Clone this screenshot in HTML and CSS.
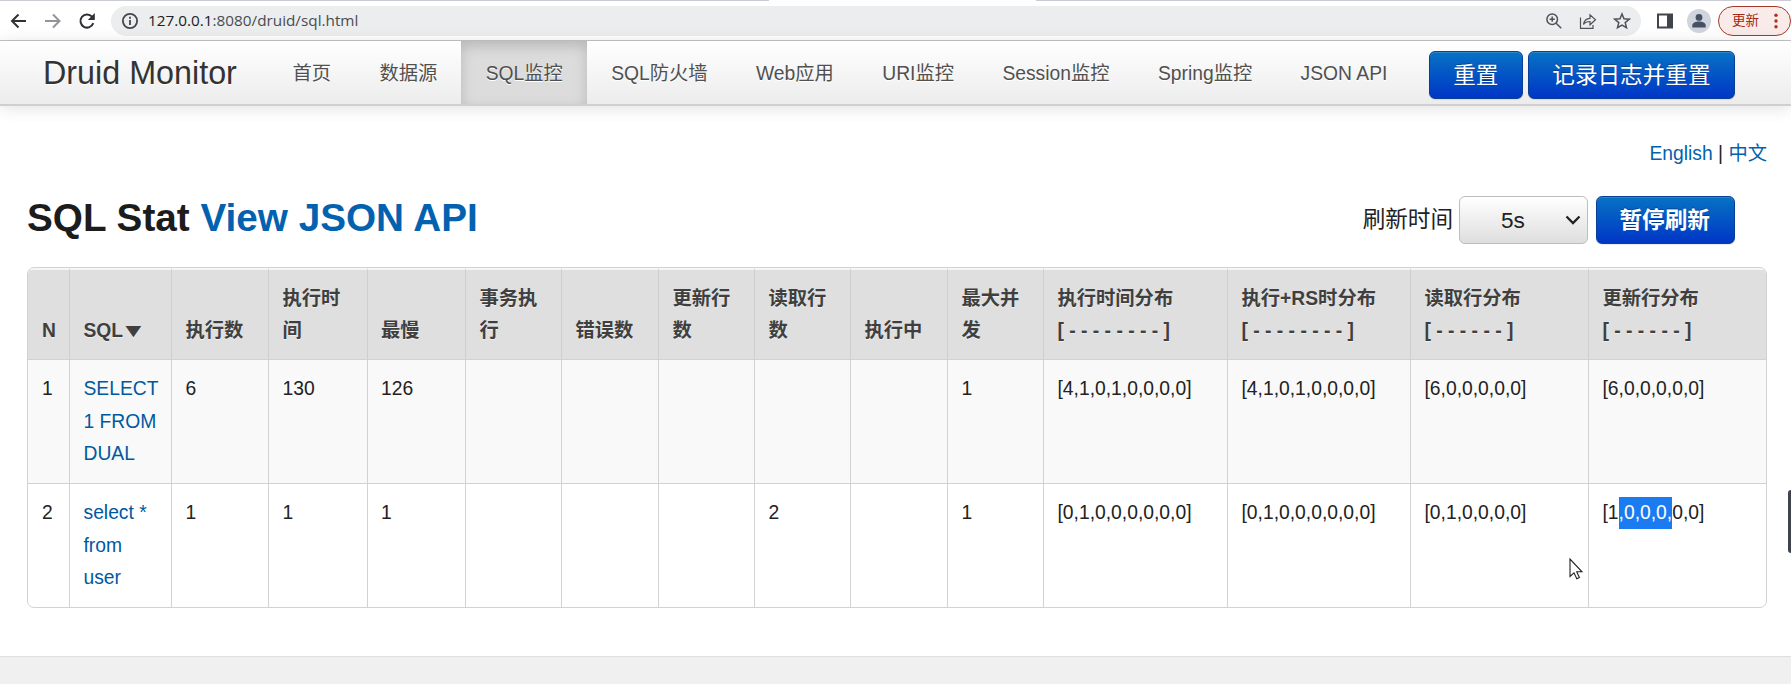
FILE: index.html
```html
<!DOCTYPE html>
<html lang="zh-CN">
<head>
<meta charset="utf-8">
<title>Druid SQL Stat</title>
<link rel="stylesheet" href="styles.css">
</head>
<body>
<div class="page">
  <header class="browser">
    <div class="tab-edge"><i class="edge-left"></i><i class="edge-right"></i></div>
    <div class="toolbar">
      <div class="history">
        <svg width="18" height="18" viewBox="0 0 18 18" class="icon dark"><path d="M16 9H2.5M8.500 2.500L2 9l6.500 6.500"/></svg>
        <svg width="18" height="18" viewBox="0 0 18 18" class="icon muted"><path d="M1 9h14.5M9 2.500L15.500 9 9 15.500"/></svg>
        <svg width="18" height="18" viewBox="0 0 18 18" class="icon dark"><path d="M15.3 11.2A6.6 6.6 0 1 1 14 4.6l1.6 1.7"/><path class="solid" d="M16.8 1v7h-7z"/></svg>
      </div>
      <div class="address">
        <svg width="18" height="18" viewBox="0 0 18 18" class="icon info"><circle cx="9" cy="9" r="7.1"/><path d="M9 8v5M9 4.8v1.9"/></svg>
        <span class="url"><b>127.0.0.1</b>:8080/druid/sql.html</span>
        <div class="address-tools">
          <svg width="18" height="18" viewBox="0 0 18 18" class="icon thin"><circle cx="7.2" cy="7.2" r="5.3"/><path d="M11.2 11.2l5 5M4.6 7.2h5.2M7.2 4.6v5.2"/></svg>
          <svg width="18" height="18" viewBox="0 0 18 18" class="icon share"><path d="M1.500 5.500V16.300h12.500v-3.300M4.500 12.500c.6-4 3-6 6.500-6.200V2.800l5.500 5-5.500 5V9.500c-3 0-5 .8-6.500 3z"/></svg>
          <svg width="18" height="18" viewBox="0 0 18 18" class="icon thin"><path d="M9 2l2 4.800 5.200.4-4 3.400 1.300 5.100L9 13l-4.500 2.700 1.300-5.100-4-3.400 5.200-.4z"/></svg>
        </div>
      </div>
      <svg width="16" height="16" viewBox="0 0 16 16" class="panel"><path fill-rule="evenodd" d="M0 .5h16v15H0zM2 2.500v11h8v-11z"/></svg>
      <svg width="24" height="24" viewBox="0 0 24 24" class="avatar"><circle cx="12" cy="12" r="12" fill="#d0d4dc"/><circle cx="12" cy="8.400" r="3.400" fill="#465063"/><path d="M5.300 18.500v-2c0-5.300 13.400-5.300 13.400 0v2z" fill="#465063"/></svg>
      <div class="update"><span>更新</span><svg width="4" height="16" viewBox="0 0 4 16"><circle cx="2" cy="2.200" r="1.700"/><circle cx="2" cy="8" r="1.700"/><circle cx="2" cy="13.800" r="1.700"/></svg></div>
    </div>
  </header>

  <nav class="navbar">
    <a class="brand">Druid Monitor</a>
    <ul class="menu">
      <li>首页</li><li>数据源</li><li class="active">SQL监控</li><li>SQL防火墙</li><li>Web应用</li><li>URI监控</li><li>Session监控</li><li>Spring监控</li><li>JSON API</li>
    </ul>
    <div class="nav-actions"><a class="btn">重置</a><a class="btn">记录日志并重置</a></div>
  </nav>

  <main class="content">
    <div class="lang"><a>English</a> | <a>中文</a></div>
    <div class="title-row">
      <h3>SQL Stat <a>View JSON API</a></h3>
      <div class="refresh">
        <span class="refresh-label">刷新时间</span>
        <div class="select"><span>5s</span><svg width="16" height="10" viewBox="0 0 16 10"><path d="M1.500 1.500L8 8l6.500-6.500"/></svg></div>
        <a class="btn pause">暂停刷新</a>
      </div>
    </div>
    <table class="stat">
      <colgroup><col class="c-n"><col class="c-sql"><col class="c-count"><col class="c-time"><col class="c-slow"><col class="c-tx"><col class="c-err"><col class="c-upd"><col class="c-read"><col class="c-run"><col class="c-conc"><col class="c-h1"><col class="c-h2"><col class="c-h3"><col class="c-h4"></colgroup>
      <thead>
        <tr><th>N</th><th>SQL<span class="sort">▼</span></th><th>执行数</th><th>执行时间</th><th>最慢</th><th>事务执行</th><th>错误数</th><th>更新行数</th><th>读取行数</th><th>执行中</th><th>最大并发</th><th>执行时间分布<br>[ - - - - - - - - ]</th><th>执行+RS时分布<br>[ - - - - - - - - ]</th><th>读取行分布<br>[ - - - - - - ]</th><th>更新行分布<br>[ - - - - - - ]</th></tr>
      </thead>
      <tbody>
        <tr class="odd"><td>1</td><td><a>SELECT<br>1 FROM<br>DUAL</a></td><td>6</td><td>130</td><td>126</td><td></td><td></td><td></td><td></td><td></td><td>1</td><td>[4,1,0,1,0,0,0,0]</td><td>[4,1,0,1,0,0,0,0]</td><td>[6,0,0,0,0,0]</td><td>[6,0,0,0,0,0]</td></tr>
        <tr><td>2</td><td><a>select *<br>from<br>user</a></td><td>1</td><td>1</td><td>1</td><td></td><td></td><td></td><td>2</td><td></td><td>1</td><td>[0,1,0,0,0,0,0,0]</td><td>[0,1,0,0,0,0,0,0]</td><td>[0,1,0,0,0,0]</td><td>[1<span class="selected">,0,0,0,</span>0,0]</td></tr>
      </tbody>
    </table>
  </main>
  <footer class="footer"></footer>

  <div class="side-handle"></div>
  <svg class="cursor" width="14" height="22" viewBox="0 0 14 22"><path d="M1 1v17.500l4-3.700 2.800 6 2.600-1.200-2.700-5.800H13z"/></svg>
</div>
</body>
</html>
```

FILE: styles.css
```css
* { box-sizing: border-box; }
body { margin: 0; background: #fff; }
.page {
  position: relative;
  width: 1791px;
  height: 684px;
  overflow: hidden;
  display: flex;
  flex-direction: column;
  font-family: "Liberation Sans", "Noto Sans CJK SC", sans-serif;
  font-size: 19.3px;
  line-height: 32.2px;
  color: #222;
}
a { color: #0059a0; text-decoration: none; }

/* Browser toolbar */
.browser { height: 41px; border-bottom: 1px solid #c4c4c4; background: #fff; flex: none; }
.tab-edge { display: flex; justify-content: space-between; height: 2px; }
.tab-edge i { background: #cbcbd5; height: 1px; }
.edge-left { width: 769px; }
.edge-right { width: 755px; }
.toolbar { display: flex; align-items: center; height: 38px; }
.history { display: flex; gap: 16px; padding-left: 10px; width: 111px; }
.icon { fill: none; stroke-width: 2; display: block; }
.dark { stroke: #303134; }
.dark .solid { fill: #303134; stroke: none; }
.muted { stroke: #929497; }
.info { stroke: #444649; stroke-width: 1.8; }
.thin { stroke: #505256; stroke-width: 1.5; }
.share { stroke: #505256; stroke-width: 1.2; }
.address { display: flex; align-items: center; width: 1530px; height: 30px; border-radius: 15px; background: #ebedee; padding: 0 10px 0 10px; }
.url { font: 15.3px/28px "Open Sans", "Noto Sans", sans-serif; height: 30px; color: #4a4c50; margin-left: 9px; }
.url b { font-weight: 400; color: #202124; }
.address-tools { display: flex; gap: 16px; margin-left: auto; }
.panel { margin-left: 16px; fill: #41444a; }
.avatar { margin-left: 14px; }
.update { display: flex; align-items: center; justify-content: space-between; width: 73px; height: 30px; margin-left: 7px; padding: 0 12px 0 13px; border: 1px solid #a3392b; border-radius: 15px; background: #f9ebe9; color: #a52714; font-size: 13.5px; }
.update svg { fill: #b03020; }

/* Navigation */
.navbar {
  position: relative;
  display: flex;
  flex: none;
  height: 65px;
  border-bottom: 2px solid #cfcfcf;
  background: linear-gradient(#fff, #ececec);
  box-shadow: 0 2px 16px rgba(0, 0, 0, .12);
}
.brand { width: 268.3px; padding-left: 43px; font-size: 32.3px; line-height: 64px; color: #333; text-shadow: 0 1px 0 #fff; }
.menu { display: flex; list-style: none; margin: 0; padding: 0; }
.menu li { padding: 0 24.2px; font-size: 19.3px; line-height: 65px; height: 63px; color: #505050; text-shadow: 0 1px 0 #fff; white-space: nowrap; }
.menu .active { background: #dcdcdc; box-shadow: inset 0 5px 13px rgba(0, 0, 0, .17); }
.nav-actions { display: flex; gap: 5px; margin-left: auto; padding: 10px 56px 0 0; }
.btn {
  height: 48px;
  padding: 0 23.5px;
  border: 1px solid #0a3f96;
  border-radius: 6px;
  background: linear-gradient(#0772c4, #0036c6);
  box-shadow: inset 0 1px 0 rgba(255, 255, 255, .15), 0 1px 1px rgba(0, 0, 0, .08);
  color: #fff;
  font-size: 22.6px;
  line-height: 47px;
  text-shadow: 0 -1px 0 rgba(0, 0, 0, .3);
  white-space: nowrap;
}

/* Page content */
.content { height: 550px; flex: none; padding: 32px 24px 0 27px; }
.lang { text-align: right; height: 32px; line-height: 32px; }
.lang a, h3 a { color: #0362af; }
.title-row { display: flex; justify-content: space-between; align-items: flex-start; height: 97px; padding-top: 26px; }
h3 { margin: 0; font-size: 38.7px; line-height: 44px; color: #1c1c1c; }
.refresh { display: flex; padding-right: 32px; font-size: 22.6px; line-height: 47px; }
.select {
  display: flex;
  align-items: center;
  width: 129px;
  height: 48px;
  margin: 0 8px 0 6px;
  padding: 0 6px 0 41px;
  border: 1px solid #bdbdbd;
  border-radius: 6px;
  background: linear-gradient(#fff, #dedede);
}
.select svg { margin-left: auto; fill: none; stroke: #222; stroke-width: 2.3; }
.pause { font-weight: 700; width: 139px; line-height: 48px; padding: 0 22.5px; }

/* Statistics table */
.stat { table-layout: fixed; width: 1740px; height: 341px; border: 1px solid #d2d2d2; border-radius: 7px; border-collapse: separate; border-spacing: 0; overflow: hidden; }
.stat th, .stat td { height: 124px; padding: 13px 12px 12px 13.5px; text-align: left; vertical-align: top; border-left: 1px solid #d2d2d2; border-top: 1px solid #d2d2d2; }
.stat th { height: 91px; padding-bottom: 12px; vertical-align: bottom; background: #dfdfdf; color: #3f3f3f; border-left-color: #cfcfcf; border-top: 2px solid #f6f6f6; text-shadow: 0 1px 0 #eee; }
.stat tr > :first-child { border-left: 0; padding-left: 14px; }
.sort { display: inline-block; margin-left: -3px; transform: scaleX(1.4); transform-origin: left center; }
.odd td { background: #f9f9f9; }
.selected { display: inline-block; height: 32px; background: #1a7cf0; color: #fff; }
.c-n { width: 41px; }
.c-sql { width: 102px; }
.c-count { width: 97px; }
.c-time { width: 98.5px; }
.c-slow { width: 98.5px; }
.c-tx { width: 96px; }
.c-err { width: 97px; }
.c-upd, .c-read { width: 96px; }
.c-run { width: 97px; }
.c-conc { width: 96px; }
.c-h1 { width: 184px; }
.c-h2 { width: 183px; }
.c-h3 { width: 178px; }
.c-h4 { width: 178px; }

.footer { flex: 1; border-top: 1px solid #dfdfdf; background: #f0f0f0; }

.side-handle { position: absolute; right: 0; top: 490px; width: 3px; height: 63px; border-radius: 3px 0 0 3px; background: #3e434d; }
.cursor { position: absolute; left: 1569px; top: 558px; fill: #fff; stroke: #222; stroke-width: 1.100; }
```
